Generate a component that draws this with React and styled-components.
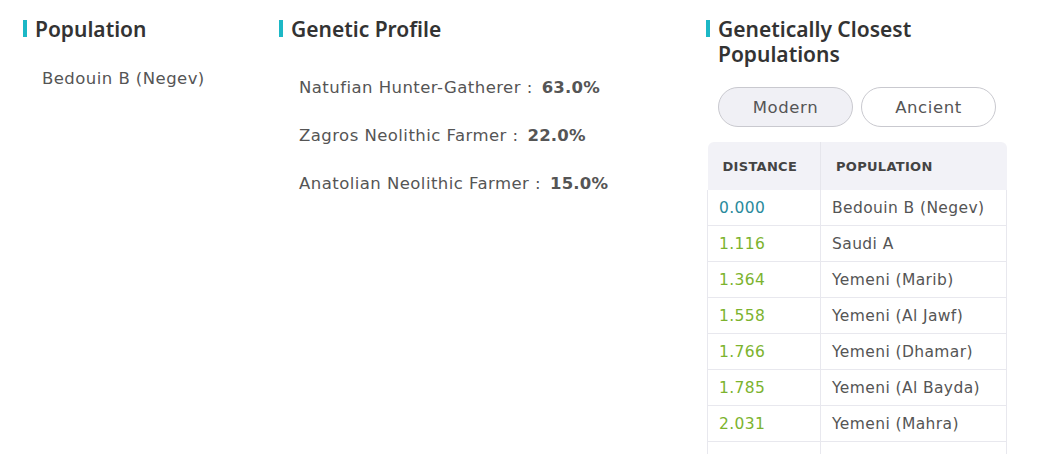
import React, { useState } from 'react';
import styled, { createGlobalStyle } from 'styled-components';

const GlobalStyle = createGlobalStyle`
  html, body {
    margin: 0;
    padding: 0;
    background: #ffffff;
    overflow: hidden;
  }
  body {
    font-family: "DejaVu Sans", "Noto Sans", sans-serif;
    color: #555;
  }
`;

const Page = styled.div`
  display: grid;
  grid-template-columns: 256px 427px 301px;
  padding: 17px 0 0 23px;
`;

const Column = styled.section`
  display: flex;
  flex-direction: column;
`;

const Heading = styled.h2`
  display: flex;
  align-items: flex-start;
  gap: 8px;
  margin: 0;
  font-family: "Noto Sans", "DejaVu Sans", sans-serif;
  font-size: 21px;
  font-weight: 600;
  line-height: 25px;
  color: #333;
  max-width: ${({ $max }) => $max || 'none'};

  &::before {
    content: '';
    flex: 0 0 4px;
    height: 17px;
    margin-top: 3px;
    background: #1cb8c6;
  }
`;

const PlainText = styled.div`
  margin: 27px 0 0 19px;
  font-size: 16.5px;
  letter-spacing: 0.45px;
  color: #555;
`;

const ProfileList = styled.div`
  display: flex;
  flex-direction: column;
  gap: 26px;
  margin: 35px 0 0 20px;
`;

const ProfileRow = styled.div`
  display: flex;
  gap: 9px;
  font-size: 16.5px;
  letter-spacing: 0.45px;
  line-height: 22px;
  color: #555;
`;

const Share = styled.span`
  font-weight: 600;
  letter-spacing: 0.2px;
`;

const Tabs = styled.div`
  display: flex;
  gap: 8px;
  margin: 20px 0 0 12px;
`;

const Tab = styled.button`
  width: 135px;
  height: 40px;
  border-radius: 20px;
  border: 1.5px solid #c9c9cf;
  background: ${({ $active }) => ($active ? '#f0f0f5' : '#ffffff')};
  color: #555;
  font-family: inherit;
  font-size: 16.5px;
  letter-spacing: 0.6px;
  cursor: pointer;
`;

const Table = styled.table`
  margin: 15px 0 0 1px;
  width: 300px;
  border-collapse: collapse;
  font-size: 15.5px;
  letter-spacing: 0.4px;
`;

const HeadCell = styled.th`
  box-sizing: border-box;
  height: 48px;
  padding: 0 0 0 15px;
  background: #f2f2f7;
  border-right: 1px solid #e6e6ec;
  text-align: left;
  font-size: 13px;
  font-weight: 600;
  letter-spacing: 0.3px;
  color: #444;
  width: ${({ $w }) => $w || 'auto'};

  &:first-child {
    border-top-left-radius: 6px;
  }
  &:last-child {
    border-top-right-radius: 6px;
    border-right: none;
  }
`;

const Row = styled.tr`
  border-bottom: 1px solid #e8e8ee;
`;

const Cell = styled.td`
  height: 35px;
  padding: 0 0 0 11px;
  border-left: 1px solid #e8e8ee;
  border-right: 1px solid #e8e8ee;
  color: ${({ $tone }) =>
    $tone === 'self' ? '#2a8a9c' : $tone === 'near' ? '#7cb32e' : '#555'};
`;

const profile = [
  { name: 'Natufian Hunter-Gatherer', share: '63.0%' },
  { name: 'Zagros Neolithic Farmer', share: '22.0%' },
  { name: 'Anatolian Neolithic Farmer', share: '15.0%' },
];

const closest = [
  { d: '0.000', pop: 'Bedouin B (Negev)' },
  { d: '1.116', pop: 'Saudi A' },
  { d: '1.364', pop: 'Yemeni (Marib)' },
  { d: '1.558', pop: 'Yemeni (Al Jawf)' },
  { d: '1.766', pop: 'Yemeni (Dhamar)' },
  { d: '1.785', pop: 'Yemeni (Al Bayda)' },
  { d: '2.031', pop: 'Yemeni (Mahra)' },
  { d: '', pop: '' },
];

export default function App() {
  const [tab, setTab] = useState('modern');

  return (
    <>
      <GlobalStyle />
      <Page>
        <Column>
          <Heading>Population</Heading>
          <PlainText>Bedouin B (Negev)</PlainText>
        </Column>

        <Column>
          <Heading>Genetic Profile</Heading>
          <ProfileList>
            {profile.map((p) => (
              <ProfileRow key={p.name}>
                <span>{p.name} :</span>
                <Share>{p.share}</Share>
              </ProfileRow>
            ))}
          </ProfileList>
        </Column>

        <Column>
          <Heading $max="230px">Genetically Closest Populations</Heading>
          <Tabs>
            <Tab $active={tab === 'modern'} onClick={() => setTab('modern')}>Modern</Tab>
            <Tab $active={tab === 'ancient'} onClick={() => setTab('ancient')}>Ancient</Tab>
          </Tabs>
          <Table>
            <thead>
              <tr>
                <HeadCell $w="113px">DISTANCE</HeadCell>
                <HeadCell>POPULATION</HeadCell>
              </tr>
            </thead>
            <tbody>
              {closest.map((r, i) => (
                <Row key={i}>
                  <Cell $tone={i === 0 ? 'self' : 'near'}>{r.d}</Cell>
                  <Cell>{r.pop}</Cell>
                </Row>
              ))}
            </tbody>
          </Table>
        </Column>
      </Page>
    </>
  );
}
